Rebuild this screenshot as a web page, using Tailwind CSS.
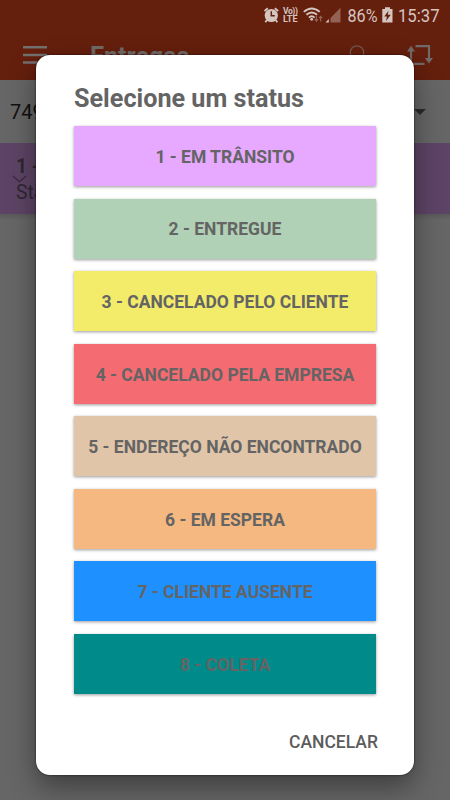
<!DOCTYPE html>
<html lang="pt-BR">
  <head>
    <meta charset="utf-8" />
    <meta name="viewport" content="initial-scale=1, width=device-width" />
    <title>Entregas</title>
    <script src="https://cdn.jsdelivr.net/npm/@tailwindcss/browser@4"></script>
  </head>
  <body class="font-['Roboto',sans-serif] bg-[#666666]">
    <div class="relative w-[450px] h-[800px] overflow-hidden bg-[#666666]">
      <!-- Page under the dialog -->
      <header class="h-20 bg-[#651f0d]">
        <div class="h-8 flex items-start justify-end pr-[10px] pt-[6px] text-[#d5c5c1]">
          <svg class="w-[17px] h-[18px]" viewBox="0 0 17 18" fill="none">
            <circle cx="7.3" cy="9.5" r="6.6" fill="#d5c5c1" />
            <path d="M.4 5 3.8 2.2M14.2 5 10.8 2.2M2.9 14 1.3 16.3M11.7 14 13.3 16.3" stroke="#d5c5c1" stroke-width="1.8" />
            <path d="M7.3 5.3V9.8H10.8" stroke="#651f0d" stroke-width="1.5" />
          </svg>
          <div class="ml-[2px] pt-px w-[17px] text-[8.5px] font-bold tracking-[-0.4px] whitespace-nowrap">
            <p class="leading-[8px]">Vo))</p>
            <p class="leading-[9px] text-[9px] tracking-[0px]">LTE</p>
          </div>
          <svg class="ml-[3px] w-[20px] h-[18px]" viewBox="0 0 20 18" fill="none" stroke="#d5c5c1">
            <path d="M.8 5.9Q8.7-1.1 16.7 5.9" stroke-width="1.9" />
            <path d="M3.4 8.8Q8.7 4.2 14.1 8.8" stroke-width="1.9" />
            <path d="M5.9 11.6Q8.7 9 11.6 11.6" stroke-width="1.9" />
            <circle cx="8.7" cy="13.3" r="1.4" fill="#d5c5c1" stroke="none" />
            <path d="M13.4 10V15M11.8 13.4 13.4 15.2 15 13.4M17.6 15.4V10.6M16 12.2 17.6 10.4 19.2 12.2" stroke="#946255" stroke-width="1.2" />
          </svg>
          <svg class="ml-[2px] w-[17px] h-[18px]" viewBox="0 0 17 18">
            <path d="M5.5 12 15.5 1.8V16.5H5.5Z" fill="#946255" />
            <path d="M.5 16.5 3.8 13V16.5Z" fill="#d5c5c1" />
          </svg>
          <svg class="ml-[5px] w-[31px] h-[22px] overflow-visible" viewBox="0 0 31 22" fill="#d5c5c1">
            <text x=".5" y="16" font-size="18" textLength="30" lengthAdjust="spacingAndGlyphs">86%</text>
          </svg>
          <svg class="ml-[4px] w-[11px] h-[18px]" viewBox="0 0 11 18">
            <path d="M3 1.2H8V3H10.5V16.5H.3V3H3Z" fill="#d5c5c1" />
            <path d="M6.5 4.8 2.2 10.5H4.9L4 15 8.8 8.7H5.8Z" fill="#651f0d" />
          </svg>
          <svg class="ml-[5px] w-[42px] h-[22px] overflow-visible" viewBox="0 0 42 22" fill="#d5c5c1">
            <text x="0" y="16" font-size="18" textLength="41.5" lengthAdjust="spacingAndGlyphs">15:37</text>
          </svg>
        </div>
        <div class="h-12 flex items-center pl-[23px] pr-[17px]">
          <svg class="w-6 h-6" viewBox="0 0 24 24" stroke="#757070" stroke-width="2.6">
            <path d="M0 3.3H24M0 11H24M0 18.5H24" />
          </svg>
          <h1 class="ml-[43px] mt-[2px] text-[25px] leading-8 font-bold text-[#706a68]">Entregas</h1>
          <svg class="ml-auto w-6 h-6" viewBox="0 0 24 24" fill="none" stroke="#74574f" stroke-width="1.3">
            <circle cx="9" cy="8.5" r="6.7" />
            <path d="m14 14 6 6" />
          </svg>
          <svg class="ml-[35px] w-[26px] h-6" viewBox="0 0 26 24" fill="none" stroke="#706a68" stroke-width="2.2">
            <path d="M8.500 2.2H22V15" />
            <path d="M4 6V19.8H17.5" />
            <path d="M0 7.5 4 1.8 8 7.5ZM17.8 14 22 19.5 26 14Z" fill="#706a68" stroke="none" />
          </svg>
        </div>
      </header>
      <div class="h-[62.5px] flex items-center justify-between pl-[10px] pr-6 pt-px text-[20px] text-[#101010]">
        <span>7498</span>
        <svg class="w-3 h-[6px]" viewBox="0 0 12 6"><path d="M0 0H12L6 6Z" fill="#2b2b2b" /></svg>
      </div>
      <div class="relative h-[71px] bg-[#5d4466] pl-4 pt-[11px] text-[19.3px] leading-[26px] text-[#2f2833]">
        <p class="font-bold">1 - EM</p>
        <p>Status</p>
        <svg class="absolute left-3 top-[32px] w-[15px] h-2" viewBox="0 0 15 8" fill="none" stroke="#3b2c41" stroke-width="1.3">
          <path d="M.7.8 7.5 6.8 14.3.8" />
        </svg>
      </div>
      <div class="h-[6px] bg-linear-to-b from-[#5a5a5a] to-[#666666]"></div>

      <!-- Status dialog -->
      <div class="absolute left-[36px] top-[55px] w-[377.5px] h-[720px] rounded-[14px] bg-white shadow-[0_0_2px_0_rgba(0,0,0,0.8),0_12px_28px_rgba(0,0,0,0.4)] pl-[38px] pr-[37.5px] pt-[27px] text-[#646464]">
        <h2 class="text-[25.2px] leading-[34px] font-bold whitespace-nowrap">Selecione um status</h2>
        <div class="mt-[10px] flex flex-col gap-[12.57px] text-[17.5px] font-bold">
          <button class="h-[60px] pt-[2px] bg-[#e7a9ff] shadow-[0_1px_3px_rgba(0,0,0,0.4)]">1 - EM TRÂNSITO</button>
          <button class="h-[60px] pt-[2px] bg-[#b0d1b5] shadow-[0_1px_3px_rgba(0,0,0,0.4)]">2 - ENTREGUE</button>
          <button class="h-[60px] pt-[2px] bg-[#f3ec6b] shadow-[0_1px_3px_rgba(0,0,0,0.4)]">3 - CANCELADO PELO CLIENTE</button>
          <button class="h-[60px] pt-[2px] bg-[#f56b72] shadow-[0_1px_3px_rgba(0,0,0,0.4)]">4 - CANCELADO PELA EMPRESA</button>
          <button class="h-[60px] pt-[2px] bg-[#e0c5a9] shadow-[0_1px_3px_rgba(0,0,0,0.4)]">5 - ENDEREÇO NÃO ENCONTRADO</button>
          <button class="h-[60px] pt-[2px] bg-[#f4b880] shadow-[0_1px_3px_rgba(0,0,0,0.4)]">6 - EM ESPERA</button>
          <button class="h-[60px] pt-[2px] bg-[#1e90ff] shadow-[0_1px_3px_rgba(0,0,0,0.4)]">7 - CLIENTE AUSENTE</button>
          <button class="h-[60px] pt-[2px] bg-[#008b8a] shadow-[0_1px_3px_rgba(0,0,0,0.4)]">8 - COLETA</button>
        </div>
        <div class="mt-[36px] -mr-[2px] flex justify-end">
          <button class="text-[17.5px] leading-6 font-medium text-[#5c5c5c]">CANCELAR</button>
        </div>
      </div>
    </div>
  </body>
</html>
